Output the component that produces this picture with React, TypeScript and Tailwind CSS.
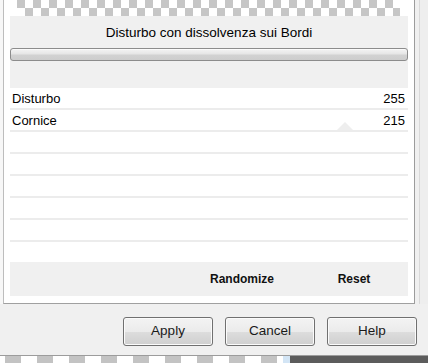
import React from "react";

const Row = ({ label, value, thumb }: { label?: string; value?: string; thumb?: boolean }) => (
  <div className="relative h-[22px] border-b-2 border-[#ececec] flex items-center justify-between pl-[2px] pr-[3px] text-[13px] text-black leading-none">
    <span>{label}</span>
    <span>{value}</span>
    {thumb && (
      <svg className="absolute left-[327px] top-[12px]" width="16" height="8" viewBox="0 0 16 8">
        <polygon points="0,8 8,0 16,8" fill="#eeeeee" />
      </svg>
    )}
  </div>
);

const Btn = ({ children }: { children: React.ReactNode }) => (
  <button className="w-[90px] h-[29px] rounded-[3px] border border-[#707070] bg-[linear-gradient(#f3f3f3_0%,#ebebeb_50%,#dddddd_51%,#cfcfcf_100%)] text-[13.5px] text-[#1a1a1a] flex items-center justify-center shadow-[inset_0_0_0_1px_#fbfbfb]">
    {children}
  </button>
);

export default function App() {
  return (
    <div className="w-[428px] h-[363px] bg-[#f0f0f0] flex flex-col overflow-hidden font-['Liberation_Sans',Arial,sans-serif]">
      <div className="flex h-[304px] shrink-0">
        <div className="w-[3px] bg-[#f7f7f7]" />
        <div className="w-[412px] border-l border-r border-b border-l-[#bdbdbd] border-r-[#9c9c9c] border-b-[#a0a0a0] bg-white flex flex-col">
          <div className="h-[16px] pl-[13px]">
            <div className="w-[383px] h-full bg-[repeating-conic-gradient(#ffffff_0_25%,#c6c6c6_0_50%)] bg-[length:16px_16px]" />
          </div>
          <div className="mx-[6px] h-[72px] bg-[#f0f0f0] flex flex-col">
            <div className="pt-[9px] leading-[16px] text-[13.5px] text-black text-center">Disturbo con dissolvenza sui Bordi</div>
            <div className="mt-[7px] h-[13px] rounded-[3px] border border-[#8c8c8c] bg-[linear-gradient(#f4f4f4_0%,#e6e6e6_45%,#d2d2d2_55%,#cdcdcd_100%)] shadow-[inset_0_1px_0_#fafafa]" />
          </div>
          <div className="mx-[6px] flex flex-col">
            <Row label="Disturbo" value="255" />
            <Row label="Cornice" value="215" thumb />
            <Row />
            <Row />
            <Row />
            <Row />
            <Row />
          </div>
          <div className="h-[20px]" />
          <div className="mx-[6px] h-[34px] bg-[#f0f0f0] flex justify-end items-center text-[12px] font-bold text-[#111]">
            <div className="w-[116px] text-center">Randomize</div>
            <div className="w-[108px] text-center">Reset</div>
          </div>
        </div>
        <div className="flex-1 flex">
          <div className="w-[4px] bg-[#f0f0f0]" />
          <div className="w-[1px] bg-[#d9d9d9]" />
          <div className="flex-1 bg-[#eeeeee]" />
        </div>
      </div>
      <div className="h-[51px] shrink-0 flex justify-end gap-[12px] pt-[13px] pr-[11px]">
        <Btn>Apply</Btn>
        <Btn>Cancel</Btn>
        <Btn>Help</Btn>
      </div>
      <div className="h-[1px] bg-[#9c9c9c] shrink-0" />
      <div className="flex-1 flex">
        <div className="w-[283px] bg-[repeating-linear-gradient(90deg,#c3c3c3_0_16px,#ffffff_16px_32px)] bg-[position:5px_0]" />
        <div className="w-[7px] bg-[#d3e5f5]" />
        <div className="flex-1 bg-[#5c5c5c]" />
      </div>
    </div>
  );
}
